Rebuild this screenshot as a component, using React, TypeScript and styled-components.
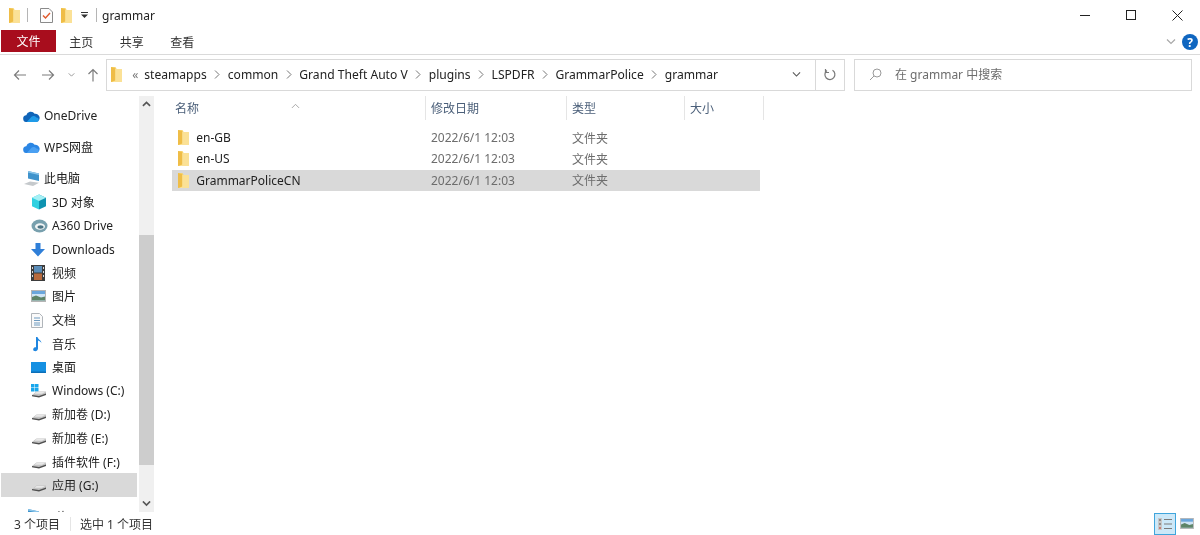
import { FC } from "react";
import styled, { createGlobalStyle } from "styled-components";

const GlobalStyle = createGlobalStyle`
  html, body {
    margin: 0;
    padding: 0;
    background: #fff;
  }
  * {
    box-sizing: border-box;
  }
`;

const FolderIcon: FC<{ size?: number }> = ({ size = 15 }) => (
  <svg width={size * 0.75} height={size} viewBox="1 1 9 12">
    <path d="M1 1h3.500l1 1.500H10V13H1z" fill="#f6d26b" />
    <path d="M4.500 2.500H10V13H1.600l2.900-1.200z" fill="#fbe196" />
    <path d="M1 1v12l3.200-1.200V2z" fill="#efbd47" />
  </svg>
);

const DriveIcon: FC<{ windows?: boolean }> = ({ windows }) => (
  <svg width="16" height="16" viewBox="0 0 16 16">
    {windows && (
      <g fill="#17a6ec">
        <rect x="0" y="1" width="3.500" height="3.500" />
        <rect x="4" y="1" width="3.500" height="3.500" />
        <rect x="0" y="5" width="3.500" height="3.500" />
        <rect x="4" y="5" width="3.500" height="3.500" />
      </g>
    )}
    <path d="M1 12l4.500-3.500H15v3l-7 2.500-7-1z" fill="#c4c4c4" />
    <path d="M1 12l7 1 7-2.500V12l-7 2.500-7-1.200z" fill="#4f4f4f" />
    <path d="M5.500 9H14l-3 1.800H3.500z" fill="#e8e8e8" />
  </svg>
);

const CloudIcon: FC<{ dark?: boolean }> = ({ dark }) => (
  <svg width="17" height="12" viewBox="0 0 16 11.500">
    <path
      d="M3.500 11.500A3.200 3.200 0 0 1 3 5.100 4.400 4.400 0 0 1 11 3.600 3.900 3.900 0 0 1 12.500 11.500z"
      fill={dark ? "#2b86e4" : "#0f64b8"}
    />
    <path
      d="M3.500 11.500l4.500-5a3 3 0 0 1 4.600 .6A2.200 2.200 0 0 1 13 11.500z"
      fill={dark ? "#4aa0f2" : "#1f9be8"}
    />
  </svg>
);

const PcIcon = () => (
  <svg width="18" height="17" viewBox="0 0 18 17">
    <path d="M5 1l11 2.500V11L5 8.500z" fill="#3f93cc" />
    <path d="M5 1l11 2.500v1.500L5 2.500z" fill="#8cc6ea" />
    <path d="M1 14l6-2.500 9 1.300-6 3.200z" fill="#c5c9cc" />
  </svg>
);

const CubeIcon = () => (
  <svg width="16" height="16" viewBox="0 0 16 16">
    <path d="M8 .5l7 3.200v8.600L8 15.500z" fill="#0f93b0" />
    <path d="M8 .5L1 3.700v8.600l7 3.200z" fill="#2fd0e0" />
    <path d="M8 .5l7 3.200L8 7 1 3.700z" fill="#a5f0f5" />
  </svg>
);

const A360Icon = () => (
  <svg width="17" height="14" viewBox="0 0 16 14">
    <ellipse cx="8" cy="7" rx="8" ry="6.500" fill="#78a0ae" />
    <ellipse cx="8.500" cy="7.500" rx="5" ry="3.200" fill="#f2f5f6" />
    <ellipse cx="9" cy="8" rx="3" ry="1.700" fill="#4d7585" />
  </svg>
);

const DownloadIcon = () => (
  <svg width="14" height="15" viewBox="0 0 14 15">
    <path d="M4.500 1h5v6H14l-7 7.500L0 7h4.500z" fill="#2f7fd8" />
  </svg>
);

const VideoIcon = () => (
  <svg width="14" height="16" viewBox="0 0 14 16">
    <rect width="14" height="16" fill="#3c3c3c" />
    <rect x="3" y="1" width="8" height="6.500" fill="#5b8db8" />
    <rect x="3" y="8.500" width="8" height="6.500" fill="#b86a3c" />
    <g fill="#d9d9d9">
      <rect x="1" y="2" width="1" height="2" />
      <rect x="1" y="6" width="1" height="2" />
      <rect x="1" y="10" width="1" height="2" />
      <rect x="12" y="2" width="1" height="2" />
      <rect x="12" y="6" width="1" height="2" />
      <rect x="12" y="10" width="1" height="2" />
    </g>
  </svg>
);

const PictureIcon: FC<{ w?: number; h?: number }> = ({ w = 15, h = 12 }) => (
  <svg width={w} height={h} viewBox="0 0 15 12">
    <rect width="15" height="12" fill="#b5b5b5" />
    <rect x="1" y="1" width="13" height="10" fill="#cfe4f5" />
    <rect x="1" y="1" width="13" height="3" fill="#6aa6dc" />
    <path d="M1 7l4-1.500 5 2 4-1v4H1z" fill="#5e8468" />
  </svg>
);

const DocIcon = () => (
  <svg width="12" height="15" viewBox="0 0 12 15">
    <path d="M.5.500h8l3 3v11H.500z" fill="#fafafa" stroke="#b0b5ba" />
    <path d="M3 5h6M3 7.500h6M3 10h6M3 12h6" stroke="#6f9bc0" />
  </svg>
);

const MusicIcon = () => (
  <svg width="12" height="16" viewBox="0 0 12 16">
    <path
      d="M5 1h1.500c.3 2.500 4 3 4 6.500 0-1.500-1.800-2.500-3.500-3V12.500C7 14.500 5 15.500 3.300 15 1.500 14.500 2 12 4 11.300c.4-.1.800-.2 1-.1z"
      fill="#1f86e0"
    />
  </svg>
);

const DesktopIcon = () => (
  <svg width="15" height="11" viewBox="0 0 15 11">
    <rect width="15" height="11" fill="#1590e2" />
    <rect y="9.500" width="15" height="1.500" fill="#0c6fb8" />
  </svg>
);

const Window = styled.div`
  width: 1200px;
  height: 535px;
  display: flex;
  flex-direction: column;
  overflow: hidden;
  background: #fff;
  color: #1a1a1a;
  font-family: "Noto Sans", "Noto Sans CJK SC", sans-serif;
  font-size: 12px;
  filter: blur(0.3px);
`;

const TitleBar = styled.div`
  height: 30px;
  display: flex;
  align-items: center;
  flex-shrink: 0;
  padding-left: 9px;
`;

const QuickSlot = styled.div<{ $w: number }>`
  width: ${(p) => p.$w}px;
  display: flex;
  align-items: center;
`;

const TitleSep = styled.div`
  width: 1px;
  height: 14px;
  background: #b5b5b5;
`;

const TitleText = styled.span`
  margin-left: 5px;
  font-size: 12px;
  color: #222;
`;

const WindowButtons = styled.div`
  margin-left: auto;
  display: flex;
`;

const WindowButton = styled.div`
  width: 46px;
  height: 30px;
  display: flex;
  align-items: center;
  justify-content: center;
`;

const RibbonTabs = styled.div`
  height: 25px;
  display: flex;
  align-items: stretch;
  flex-shrink: 0;
  padding-left: 1px;
  border-bottom: 1px solid #dadada;
`;

const FileTab = styled.div`
  width: 55px;
  height: 22px;
  background: #a80d1d;
  color: #fff;
  display: flex;
  align-items: center;
  justify-content: center;
`;

const RibbonTab = styled.div`
  width: 50.5px;
  height: 24px;
  display: flex;
  align-items: center;
  justify-content: center;
  color: #333;
`;

const RibbonRight = styled.div`
  margin-left: auto;
  display: flex;
  align-items: center;
  gap: 6px;
  padding-right: 2px;
  height: 24px;
`;

const HelpBadge = styled.div`
  width: 16px;
  height: 16px;
  border-radius: 50%;
  background: #0f66c0;
  color: #fff;
  font-size: 12px;
  font-weight: 700;
  display: flex;
  align-items: center;
  justify-content: center;
`;

const NavRow = styled.div`
  height: 41px;
  display: flex;
  align-items: flex-start;
  flex-shrink: 0;
  padding-top: 4px;
`;

const NavButtons = styled.div`
  width: 106px;
  height: 32px;
  display: flex;
  align-items: center;
  padding-left: 12px;
`;

const NavSlot = styled.div<{ $w: number }>`
  width: ${(p) => p.$w}px;
  display: flex;
  justify-content: flex-start;
`;

const AddressBox = styled.div`
  width: 739px;
  height: 32px;
  border: 1px solid #d9d9d9;
  display: flex;
  align-items: center;
  padding-left: 4px;
`;

const Crumbs = styled.div`
  flex: 1;
  display: flex;
  align-items: center;
  color: #222;
  font-size: 12.1px;
  padding-bottom: 1px;
`;

const Chevrons = styled.span`
  width: 22px;
  padding-left: 10px;
  color: #777;
  font-size: 12px;
`;

const CrumbArrow = styled.div`
  width: 21px;
  display: flex;
  justify-content: center;
`;

const AddressTail = styled.div`
  width: 20px;
  display: flex;
  justify-content: center;
  margin-right: 9px;
`;

const RefreshCell = styled.div`
  width: 29px;
  height: 100%;
  border-left: 1px solid #d9d9d9;
  display: flex;
  align-items: center;
  justify-content: center;
`;

const SearchBox = styled.div`
  width: 338px;
  height: 32px;
  margin-left: 9px;
  border: 1px solid #d9d9d9;
  display: flex;
  align-items: center;
  padding: 0 0 2px 14px;
  gap: 13px;
  color: #6d6d6d;
  font-size: 12px;
`;

const Body = styled.div`
  flex: 1;
  display: flex;
  min-height: 0;
`;

const Sidebar = styled.div`
  width: 155px;
  flex-shrink: 0;
  display: flex;
  overflow: hidden;
`;

const Tree = styled.div`
  width: 139px;
  padding: 8px 0 0 1px;
  display: flex;
  flex-direction: column;
  flex-shrink: 0;
`;

const TreeRow = styled.div<{ $level: number; $selected?: boolean; $gap?: number }>`
  flex-shrink: 0;
  width: 136px;
  height: 23.6px;
  margin-top: ${(p) => p.$gap ?? 0}px;
  display: flex;
  align-items: center;
  padding-left: ${(p) => (p.$level === 0 ? 22 : 30)}px;
  background: ${(p) => (p.$selected ? "#d9d9d9" : "transparent")};
  color: #222;
  white-space: nowrap;
`;

const TreeIcon = styled.div`
  width: 21px;
  display: flex;
  align-items: center;
  justify-content: flex-start;
  flex-shrink: 0;
`;

const ScrollBar = styled.div`
  width: 15px;
  background: #f0f0f0;
  display: flex;
  flex-direction: column;
  align-items: center;
`;

const ScrollArrow = styled.div`
  height: 16px;
  width: 100%;
  display: flex;
  align-items: center;
  justify-content: center;
  flex-shrink: 0;
`;

const ScrollThumb = styled.div`
  width: 100%;
  height: 230px;
  margin-top: 123px;
  margin-bottom: auto;
  background: #cdcdcd;
`;

const FileArea = styled.div`
  flex: 1;
  padding-left: 15px;
  position: relative;
`;

const SortCaret = styled.div`
  position: absolute;
  left: 136px;
  top: -1px;
`;

const HeaderRow = styled.div`
  display: grid;
  grid-template-columns: 256px 141px 118px 79px;
  width: 594px;
  height: 24px;
  margin-bottom: 7px;
`;

const HeaderCell = styled.div`
  padding-left: 5px;
  display: flex;
  align-items: center;
  color: #4c607a;
  border-right: 1px solid #e5e5e5;
`;

const FileRow = styled.div<{ $selected?: boolean }>`
  display: grid;
  grid-template-columns: 253px 141px 118px 76px;
  width: 588px;
  height: 21.3px;
  margin-left: 2px;
  align-items: center;
  color: #6d6d6d;
  background: ${(p) => (p.$selected ? "#d9d9d9" : "transparent")};
`;

const NameCell = styled.div`
  display: flex;
  align-items: center;
  padding-left: 6px;
  gap: 7px;
  color: #222;
`;

const MetaCell = styled.div`
  padding-left: 6px;
`;

const StatusBar = styled.div`
  height: 23px;
  flex-shrink: 0;
  display: flex;
  align-items: center;
  padding-left: 14px;
  color: #333;
  background: #fff;
`;

const StatusSep = styled.div`
  width: 1px;
  height: 14px;
  background: #e5e5e5;
  margin: 0 9px 0 10px;
`;

const ViewButtons = styled.div`
  margin-left: auto;
  display: flex;
  align-items: center;
  gap: 4px;
  padding-right: 6px;
`;

const DetailsToggle = styled.div`
  width: 22px;
  height: 22px;
  background: #cce8f8;
  border: 1px solid #3fa5dc;
  display: flex;
  align-items: center;
  justify-content: center;
`;

const Arrow: FC<{ left?: boolean }> = ({ left }) => (
  <svg width="16" height="14" viewBox="0 0 16 14" style={{ transform: left ? "scaleX(-1)" : undefined }}>
    <path d="M2 7h11.500M9 2.500L13.500 7 9 11.500" fill="none" stroke="#7d7d7d" strokeWidth="1.200" />
  </svg>
);

const Chevron: FC<{ up?: boolean; color?: string; w?: number; sw?: number }> = ({ up, color = "#666", w = 9, sw = 1.2 }) => (
  <svg width={w} height={w * 0.6} viewBox="0 0 10 6">
    <path d={up ? "M1 5.500L5 1.500 9 5.500" : "M1 .500L5 4.500 9 .500"} fill="none" stroke={color} strokeWidth={sw} />
  </svg>
);

const CrumbSep = () => (
  <CrumbArrow>
    <svg width="6" height="9" viewBox="0 0 6 9">
      <path d="M1 .5L5 4.500 1 8.500" fill="none" stroke="#777" />
    </svg>
  </CrumbArrow>
);

const crumbs = ["steamapps", "common", "Grand Theft Auto V", "plugins", "LSPDFR", "GrammarPolice", "grammar"];

const treeRows = [
  { icon: <CloudIcon />, label: "OneDrive", level: 0 },
  { icon: <CloudIcon dark />, label: "WPS网盘", level: 0, gap: 7.5 },
  { icon: <PcIcon />, label: "此电脑", level: 0, gap: 8 },
  { icon: <CubeIcon />, label: "3D 对象", level: 1 },
  { icon: <A360Icon />, label: "A360 Drive", level: 1 },
  { icon: <DownloadIcon />, label: "Downloads", level: 1 },
  { icon: <VideoIcon />, label: "视频", level: 1 },
  { icon: <PictureIcon />, label: "图片", level: 1 },
  { icon: <DocIcon />, label: "文档", level: 1 },
  { icon: <MusicIcon />, label: "音乐", level: 1 },
  { icon: <DesktopIcon />, label: "桌面", level: 1 },
  { icon: <DriveIcon windows />, label: "Windows (C:)", level: 1 },
  { icon: <DriveIcon />, label: "新加卷 (D:)", level: 1 },
  { icon: <DriveIcon />, label: "新加卷 (E:)", level: 1 },
  { icon: <DriveIcon />, label: "插件软件 (F:)", level: 1 },
  { icon: <DriveIcon />, label: "应用 (G:)", level: 1, selected: true },
  { icon: <PcIcon />, label: "网络", level: 0, gap: 8 },
];

const files = [
  { name: "en-GB" },
  { name: "en-US" },
  { name: "GrammarPoliceCN", selected: true },
];

export default function App() {
  return (
    <Window>
      <GlobalStyle />
      <TitleBar>
        <QuickSlot $w={18}>
          <FolderIcon />
        </QuickSlot>
        <TitleSep />
        <QuickSlot $w={12} />
        <QuickSlot $w={21}>
          <svg width="13" height="15" viewBox="0 0 13 15">
            <path d="M.5.500h8.500l3.500 3.500v10.500H.500z" fill="#fdfdfd" stroke="#8a8a8a" />
            <path d="M3 7.500l2.500 2.500 4.500-5" fill="none" stroke="#e0582a" strokeWidth="1.400" />
          </svg>
        </QuickSlot>
        <QuickSlot $w={20}>
          <FolderIcon />
        </QuickSlot>
        <QuickSlot $w={15}>
          <svg width="7" height="6" viewBox="0 0 7 6">
            <path d="M0 0h7v1H0zM0 2.500h7L3.500 6z" fill="#333" />
          </svg>
        </QuickSlot>
        <TitleSep />
        <TitleText>grammar</TitleText>
        <WindowButtons>
          <WindowButton>
            <svg width="10" height="10" viewBox="0 0 10 10">
              <path d="M0 5.500h10" stroke="#222" />
            </svg>
          </WindowButton>
          <WindowButton>
            <svg width="10" height="10" viewBox="0 0 10 10">
              <rect x=".5" y=".5" width="9" height="9" fill="none" stroke="#222" />
            </svg>
          </WindowButton>
          <WindowButton>
            <svg width="11" height="11" viewBox="0 0 11 11">
              <path d="M.5.500l10 10M10.500.500l-10 10" stroke="#222" />
            </svg>
          </WindowButton>
        </WindowButtons>
      </TitleBar>

      <RibbonTabs>
        <FileTab>文件</FileTab>
        <RibbonTab>主页</RibbonTab>
        <RibbonTab>共享</RibbonTab>
        <RibbonTab>查看</RibbonTab>
        <RibbonRight>
          <Chevron color="#a8a8a8" w={10} />
          <HelpBadge>?</HelpBadge>
        </RibbonRight>
      </RibbonTabs>

      <NavRow>
        <NavButtons>
          <NavSlot $w={28}>
            <Arrow left />
          </NavSlot>
          <NavSlot $w={28}>
            <Arrow />
          </NavSlot>
          <NavSlot $w={19}>
            <Chevron color="#8a8a8a" w={7} />
          </NavSlot>
          <NavSlot $w={14}>
            <svg width="12" height="14" viewBox="0 0 12 14">
              <path d="M6 13.500V1.500M1.500 6L6 1.500 10.500 6" fill="none" stroke="#7d7d7d" strokeWidth="1.200" />
            </svg>
          </NavSlot>
        </NavButtons>
        <AddressBox>
          <Crumbs>
            <FolderIcon />
            <Chevrons>«</Chevrons>
            {crumbs.map((crumb, i) => (
              <span key={crumb} style={{ display: "contents" }}>
                {i > 0 && <CrumbSep />}
                <span>{crumb}</span>
              </span>
            ))}
          </Crumbs>
          <AddressTail>
            <Chevron color="#555" w={9} />
          </AddressTail>
          <RefreshCell>
            <svg width="14" height="14" viewBox="0 0 14 14">
              <path d="M9.500 2.300A5 5 0 1 1 4 2.500" fill="none" stroke="#777" strokeWidth="1.200" />
              <path d="M2.500 1v3.500H6" fill="none" stroke="#777" strokeWidth="1.200" />
            </svg>
          </RefreshCell>
        </AddressBox>
        <SearchBox>
          <svg width="13" height="13" viewBox="0 0 13 13">
            <circle cx="8" cy="5" r="4" fill="none" stroke="#9a9a9a" />
            <path d="M5 8l-4 4" stroke="#9a9a9a" />
          </svg>
          <span>在 grammar 中搜索</span>
        </SearchBox>
      </NavRow>

      <Body>
        <Sidebar>
          <Tree>
            {treeRows.map((row) => (
              <TreeRow key={row.label} $level={row.level} $selected={row.selected} $gap={row.gap}>
                <TreeIcon>{row.icon}</TreeIcon>
                {row.label}
              </TreeRow>
            ))}
          </Tree>
          <ScrollBar>
            <ScrollArrow>
              <Chevron up color="#555" sw={1.8} />
            </ScrollArrow>
            <ScrollThumb />
            <ScrollArrow>
              <Chevron color="#555" sw={1.8} />
            </ScrollArrow>
          </ScrollBar>
        </Sidebar>

        <FileArea>
          <SortCaret>
            <Chevron up color="#a0a0a0" w={9} sw={1} />
          </SortCaret>
          <HeaderRow>
            <HeaderCell>名称</HeaderCell>
            <HeaderCell>修改日期</HeaderCell>
            <HeaderCell>类型</HeaderCell>
            <HeaderCell>大小</HeaderCell>
          </HeaderRow>
          {files.map((file) => (
            <FileRow key={file.name} $selected={file.selected}>
              <NameCell>
                <FolderIcon />
                {file.name}
              </NameCell>
              <MetaCell>2022/6/1 12:03</MetaCell>
              <MetaCell>文件夹</MetaCell>
              <div />
            </FileRow>
          ))}
        </FileArea>
      </Body>

      <StatusBar>
        <span>3 个项目</span>
        <StatusSep />
        <span>选中 1 个项目</span>
        <ViewButtons>
          <DetailsToggle>
            <svg width="16" height="14" viewBox="0 0 16 14">
              <rect x="1" y="1" width="4" height="12" fill="#c8c8c8" />
              <path d="M2 3h2M2 7h2" stroke="#555" />
              <path d="M2 11h2" stroke="#c0392b" />
              <path d="M7 2.500h8M7 7h8M7 11.500h8" stroke="#7a7a7a" />
            </svg>
          </DetailsToggle>
          <PictureIcon w={14} h={11} />
        </ViewButtons>
      </StatusBar>
    </Window>
  );
}
